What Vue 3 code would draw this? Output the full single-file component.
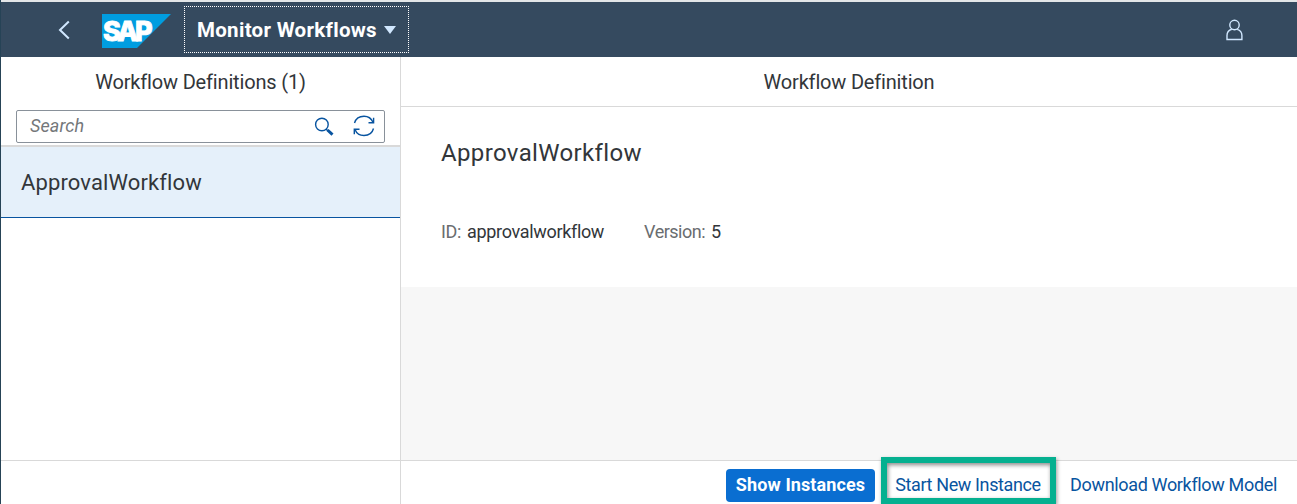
<script setup>
const definition = { name: 'ApprovalWorkflow', id: 'approvalworkflow', version: 5 }
</script>

<template>
  <div class="app">
    <header class="shell">
      <svg class="back" width="14" height="20" viewBox="0 0 14 20"><path d="M11.8 1.5 3 10l8.800 8.500" /></svg>
      <svg class="logo" width="69" height="34" viewBox="0 0 69 34">
        <path d="M0 0H69L35 34H0z" fill="#009de0" />
        <text x="1" y="27" textLength="49.500" lengthAdjust="spacing">SAP</text>
      </svg>
      <button class="title"><span class="t-title">Monitor Workflows</span><i class="caret"></i></button>
      <svg class="user" width="18" height="22" viewBox="0 0 18 22">
        <circle cx="9.500" cy="6" r="4.700" />
        <path d="M6.800 10.300C3.500 11.200 2 13.500 2 16.500V20.500H16.900V16.500C16.900 13.500 15.400 11.200 12.200 10.300" />
      </svg>
    </header>
    <div class="body">
      <aside class="master">
        <h1 class="m-head"><span class="t-mhead">Workflow Definitions (1)</span></h1>
        <div class="search">
          <span class="placeholder t-search">Search</span>
          <svg class="glass" width="20" height="20" viewBox="0 0 20 20">
            <circle cx="7.900" cy="7.500" r="6.300" /><path class="thin" d="M12 12l2 2" /><path class="handle" d="M13.500 13l5 4.600" />
          </svg>
          <svg class="refresh" width="22" height="22" viewBox="0 0 22 22">
            <path d="M1.500 8C2.800 3.800 6.500 1.300 11 1.300c4.300 0 7.500 2.500 9 6" />
            <path d="M20.600 2.800V7.700H15.500" />
            <path d="M20.500 13.500C19.300 18 15.500 20.500 11 20.500c-4.500 0-7.700-2.600-9-6" />
            <path d="M1.300 19.200V14.200H6.500" />
          </svg>
        </div>
        <div class="item"><span class="t-item">{{ definition.name }}</span></div>
        <div class="m-foot"></div>
      </aside>
      <main class="detail">
        <h1 class="d-head"><span class="t-dhead">Workflow Definition</span></h1>
        <section class="object">
          <h2><span class="t-name">{{ definition.name }}</span></h2>
          <div class="attrs">
            <div class="attr"><span class="label t-idl">ID:</span><span class="t-id">{{ definition.id }}</span></div>
            <div class="attr"><span class="label t-verl">Version:</span><span>{{ definition.version }}</span></div>
          </div>
        </section>
        <div class="blank"></div>
        <footer class="actions">
          <button class="primary"><span class="t-show">Show Instances</span></button>
          <button class="start"><span class="t-start">Start New Instance</span></button>
          <button class="download"><span class="t-down">Download Workflow Model</span></button>
        </footer>
      </main>
    </div>
  </div>
</template>

<style>
body { background: #fff; overflow: hidden; }
</style>

<style scoped>
* { box-sizing: border-box; }
.app { width: 1297px; height: 504px; overflow: hidden; display: flex; flex-direction: column; font-family: Roboto, "Liberation Sans", sans-serif; font-size: 18px; color: #32363a; border-left: 1px solid #264356; font-variant-ligatures: none; }
h1, h2 { margin: 0; font-weight: 400; }
button { font: inherit; margin: 0; padding: 0; border: 0; background: none; white-space: nowrap; }
span { white-space: nowrap; }
svg { display: block; flex: none; fill: none; }
.shell { height: 57px; flex: none; border-top: 2px solid #e3e6e8; background: #354a5f; display: flex; align-items: center; padding: 0 54px 0 56px; }
.back { stroke: #d1e8ff; stroke-width: 2; }
.logo { margin: 3px 0 0 31px; }
.logo text { font: 800 27px Inter, sans-serif; fill: #fff; stroke: #fff; stroke-width: .9; }
.title { width: 225px; height: 47px; margin-left: 13px; border: 1px dotted #fff; color: #fff; font-weight: 700; font-size: 20.5px; display: flex; align-items: center; padding-left: 12px; }
.title span { width: 180px; text-align: left; letter-spacing: .3px; }
.caret { border: 6px solid transparent; border-top: 8px solid #d1e8ff; border-bottom: 0; margin-left: 7px; }
.user { margin-left: auto; stroke: #d1e8ff; stroke-width: 1.4; }
.body { flex: 1; min-height: 0; display: flex; }
.master { width: 400px; flex: none; border-right: 1px solid #d9d9d9; display: flex; flex-direction: column; }
.m-head { height: 53px; padding-bottom: 3px; font-size: 20px; display: flex; align-items: center; justify-content: center; letter-spacing: -.17px; }
.search { height: 33px; margin: 0 15px; border: 1px solid #89919a; border-radius: 2px; display: flex; align-items: center; padding: 0 9px 0 13px; flex: none; }
.placeholder { font-style: italic; color: #74777a; margin-right: auto; padding-bottom: 2px; letter-spacing: .1px; }
.glass { stroke: #0854a0; stroke-width: 1.4; margin-right: 19px; }
.glass .handle { stroke-width: 3; }
.refresh { stroke: #0854a0; stroke-width: 1.4; margin-top: -1px; }
.item { height: 73px; margin-top: 2px; border-top: 2px solid #d9d9d9; border-bottom: 1px solid #0854a0; background: #e5f0fa; font-size: 22px; display: flex; align-items: center; padding-left: 20px; flex: none; letter-spacing: .12px; }
.m-foot { margin-top: auto; height: 44px; border-top: 1px solid #d9d9d9; }
.detail { flex: 1; display: flex; flex-direction: column; min-width: 0; }
.d-head { height: 50px; flex: none; border-bottom: 1px solid #d9d9d9; font-size: 20px; display: flex; align-items: center; justify-content: center; letter-spacing: -.18px; }
.object { height: 180px; flex: none; padding: 31px 40px 0; }
.object h2 { font-size: 24px; line-height: 30px; letter-spacing: .36px; }
.attrs { display: flex; gap: 40px; margin-top: 53px; line-height: 22px; }
.attr { display: flex; gap: 6px; letter-spacing: -.33px; }
.label { color: #6a6d70; }
.t-verl { letter-spacing: -.5px; }
.blank { flex: 1; background: #f7f7f7; }
.actions { height: 44px; flex: none; border-top: 1px solid #d9d9d9; display: flex; align-items: flex-start; justify-content: flex-end; color: #0854a0; }
.actions button { color: inherit; height: 33px; margin-top: 8px; padding-bottom: 2px; letter-spacing: -.34px; }
.actions .primary { width: 149px; background: #0a6ed1; border-radius: 4px; color: #fff; font-weight: 700; letter-spacing: .12px; }
.actions .start { width: 175px; height: 47px; margin: -4px 0 0 6px; border: 6px solid #05b090; box-shadow: 1px 2px 4px #0006, inset 1px 2px 4px #0007; padding: 8px 1px 0 0; letter-spacing: -.38px; }
.actions .download { width: 207px; margin-left: 14px; margin-right: 20px; }
</style>
